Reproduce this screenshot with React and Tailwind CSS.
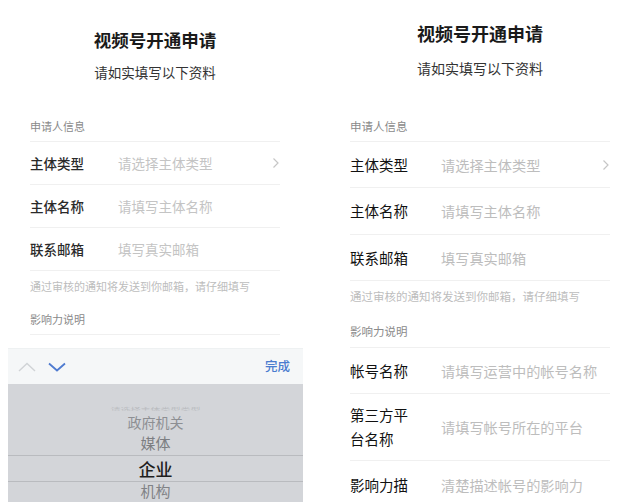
import React from 'react';

const font = "font-['Noto_Sans_CJK_SC','Noto_Sans',sans-serif]";

const Chevron = () => (
  <svg width="8" height="12" viewBox="0 0 8 12" fill="none" className="shrink-0">
    <path d="M1.5 1.5 6 6l-4.5 4.5" stroke="#c6c6c6" strokeWidth="1.2" />
  </svg>
);

// 左侧：带滚轮选择器的表单
const LeftRow = ({ label, hint, arrow }) => (
  <div className="flex h-[43px] items-center border-b border-[#f0f0f0]">
    <span className="w-[88px] shrink-0 text-[13.5px] font-medium text-[#2a2a2a]">{label}</span>
    <span className="flex-1 text-[13.5px] text-[#c4c4c4]">{hint}</span>
    {arrow && <Chevron />}
  </div>
);

const Picker = () => (
  <div className="ml-[8px] mr-[7px] mt-[13px]">
    <div className="flex h-[36px] items-center justify-between border-t border-[#eef1f2] bg-[#f5f7f8] pl-[10px] pr-[13px]">
      <div className="flex items-center gap-[12px]">
        <svg width="18" height="10" viewBox="0 0 18 10" fill="none">
          <path d="M1 9 9 1.5 17 9" stroke="#d0d3d6" strokeWidth="1.4" />
        </svg>
        <svg width="18" height="10" viewBox="0 0 18 10" fill="none">
          <path d="M1 1.5 9 8.5 17 1.5" stroke="#4f7bd0" strokeWidth="1.8" />
        </svg>
      </div>
      <span className="text-[12.5px] font-medium text-[#4a7ccf]">完成</span>
    </div>
    <div className="h-[120px] bg-[#d3d5d9] pt-[20px] text-center">
      <div className="h-[9px] overflow-hidden text-[10px] leading-[9px] text-[#b9bbbf] scale-y-50">请选择主体类型类型</div>
      <div className="h-[18px] text-[14px] leading-[18px] text-[#8d8f93]">政府机关</div>
      <div className="mt-[2px] h-[20px] text-[15px] leading-[20px] text-[#7c7e82]">媒体</div>
      <div className="mt-[2px] flex h-[27px] items-center justify-center border-y border-[#b9bbbf] text-[17px] font-medium text-[#1e1e1e]">企业</div>
      <div className="h-[18px] text-[15px] leading-[18px] text-[#808286]">机构</div>
    </div>
  </div>
);

const LeftPanel = () => (
  <div className="w-[310px] shrink-0">
    <div className="px-[30px] pt-[28px]">
      <h1 className="text-center text-[17.5px] font-bold leading-[24px] text-[#1a1a1a]">视频号开通申请</h1>
      <p className="mt-[10px] text-center text-[13.5px] leading-[20px] text-[#333]">请如实填写以下资料</p>
      <div className="mt-[36px] border-b border-[#f0f0f0] pb-[7px] text-[11px] leading-[16px] text-[#8a8a8a]">申请人信息</div>
      <LeftRow label="主体类型" hint="请选择主体类型" arrow />
      <LeftRow label="主体名称" hint="请填写主体名称" />
      <LeftRow label="联系邮箱" hint="填写真实邮箱" />
      <p className="pt-[7px] text-[11px] leading-[16px] text-[#bdbdbd]">通过审核的通知将发送到你邮箱，请仔细填写</p>
      <div className="mt-[17px] border-b border-[#f0f0f0] pb-[7px] text-[11px] leading-[16px] text-[#8a8a8a]">影响力说明</div>
    </div>
    <Picker />
  </div>
);

// 右侧：完整表单
const RightRow = ({ label, hint, arrow, className = 'h-[46px] items-center' }) => (
  <div className={`flex border-b border-[#f0f0f0] ${className}`}>
    <span className="w-[60px] shrink-0 text-[14.5px] leading-[24px] text-[#111]">{label}</span>
    <span className="ml-[31px] flex-1 text-[14.2px] leading-[24px] text-[#bdbdbd]">{hint}</span>
    {arrow && <Chevron />}
  </div>
);

const RightPanel = () => (
  <div className="w-[315px] shrink-0 pl-[30px] pr-[25px] pt-[21px]">
    <h1 className="text-center text-[18px] font-bold leading-[24px] text-[#1a1a1a]">视频号开通申请</h1>
    <p className="mt-[13px] text-center text-[14px] leading-[20px] text-[#333]">请如实填写以下资料</p>
    <div className="mt-[40px] border-b border-[#f0f0f0] pb-[7px] text-[11.5px] leading-[16px] text-[#8a8a8a]">申请人信息</div>
    <RightRow label="主体类型" hint="请选择主体类型" arrow />
    <RightRow label="主体名称" hint="请填写主体名称" className="h-[47px] items-center" />
    <RightRow label="联系邮箱" hint="填写真实邮箱" />
    <p className="pt-[7px] text-[11.5px] leading-[16px] text-[#bdbdbd]">通过审核的通知将发送到你邮箱，请仔细填写</p>
    <div className="mt-[19px] border-b border-[#f0f0f0] pb-[8px] text-[11.5px] leading-[16px] text-[#8a8a8a]">影响力说明</div>
    <RightRow label="帐号名称" hint="请填写运营中的帐号名称" />
    <RightRow label="第三方平台名称" hint="请填写帐号所在的平台" className="h-[67px] items-center" />
    <RightRow
      label="影响力描述"
      hint={<>清楚描述帐号的影响力<br />有助于通过审核（限300字）</>}
      className="items-start pt-[12px] pb-[12px]"
    />
  </div>
);

export default function App() {
  return (
    <div className={`flex h-[502px] w-[635px] gap-[10px] overflow-hidden bg-white ${font}`}>
      <LeftPanel />
      <RightPanel />
    </div>
  );
}
